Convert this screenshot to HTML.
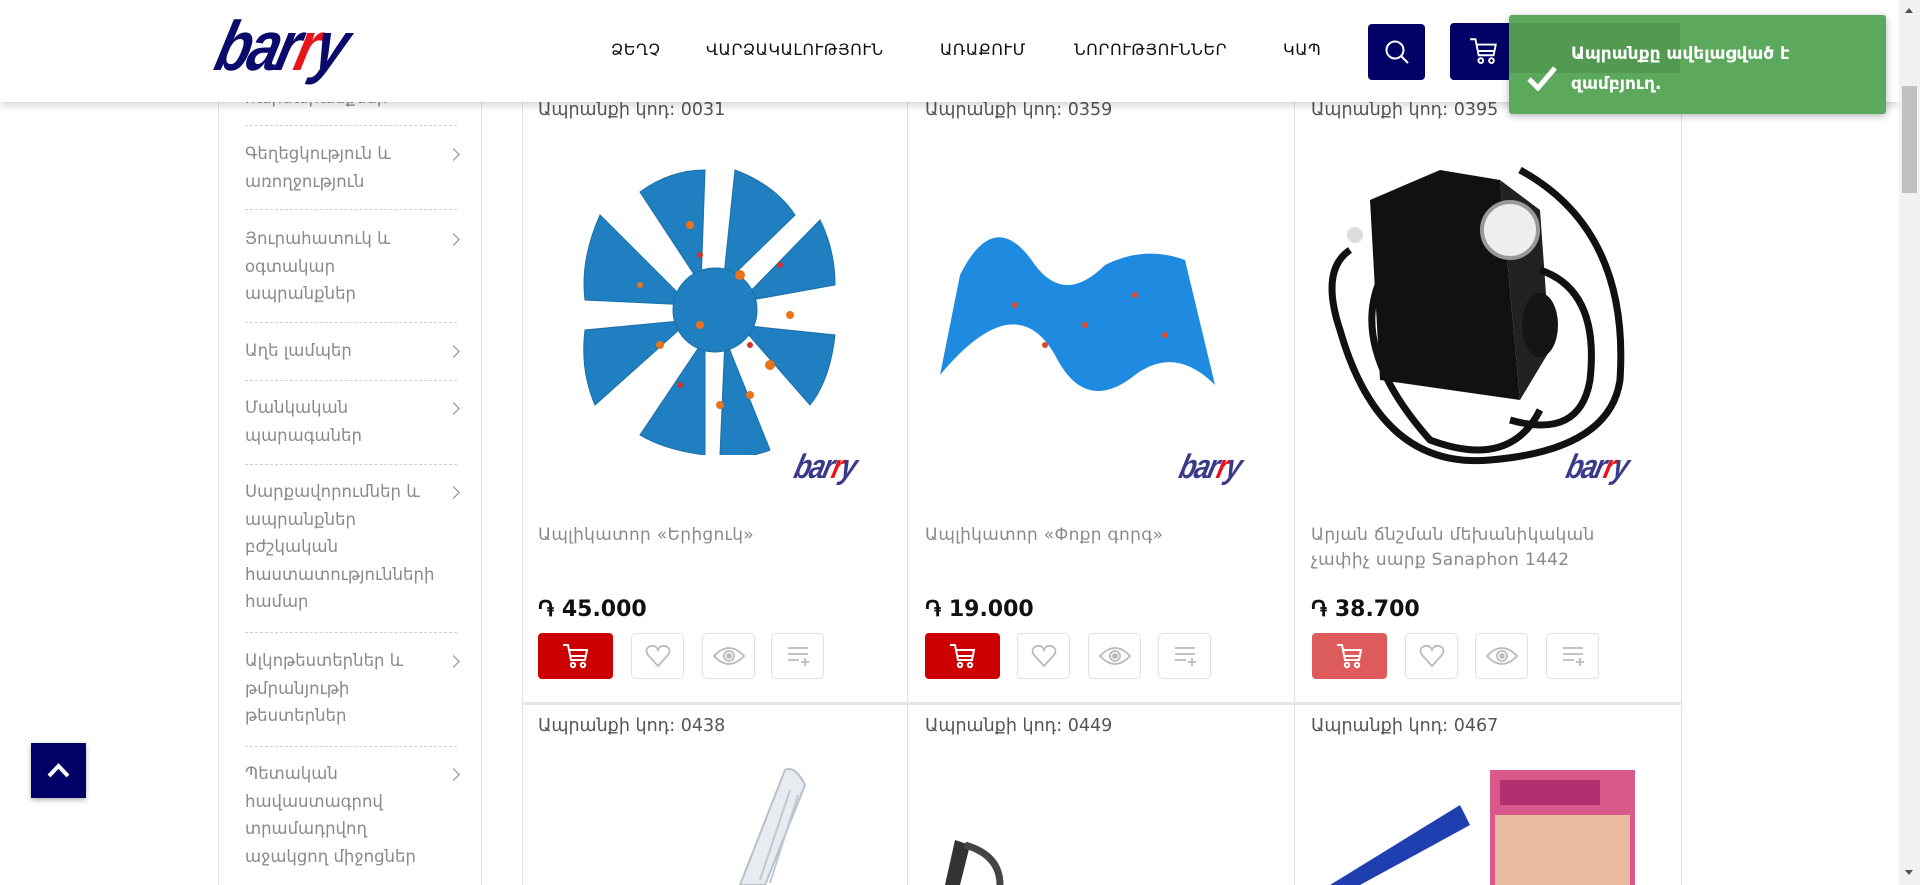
<!DOCTYPE html>
<html><head><meta charset="utf-8">
<style>
*{margin:0;padding:0;box-sizing:border-box}
body{width:1920px;height:885px;overflow:hidden;background:#fff;font-family:"DejaVu Sans","Liberation Sans",sans-serif;position:relative}
.abs{position:absolute}
header{position:absolute;left:0;top:0;width:1899px;height:102px;background:#fff;box-shadow:0 3px 8px rgba(0,0,0,.18);z-index:5}
.nav{position:absolute;top:40px;font-size:16px;color:#111;letter-spacing:.5px;white-space:nowrap}
.logo{position:absolute;left:228px;top:6px;font-family:"Liberation Sans",sans-serif;font-weight:bold;font-style:italic;font-size:70px;color:#0a0a6b;letter-spacing:-4px;transform:skewX(-14deg) scaleX(.82);transform-origin:left top}
.logo span{color:#e8141b}
.side{position:absolute;left:218px;top:0;width:264px;height:885px;border-left:1px solid #e3e3e3;border-right:1px solid #e3e3e3}
.it{position:absolute;left:26px;width:200px;font-size:16.5px;line-height:27.5px;color:#8a8a8a}
.sep{position:absolute;left:26px;width:212px;border-top:1px dashed #cfcfcf}
.chev{position:absolute;left:230px;width:9px;height:9px;border-right:1.6px solid #888;border-top:1.6px solid #888;transform:rotate(45deg)}
.vline{position:absolute;top:0;height:885px;border-left:1px solid #e3e3e3}
.code{position:absolute;font-size:17.5px;color:#555}
.name{position:absolute;font-size:17px;color:#8a8a8a;line-height:25px;letter-spacing:.3px;width:330px}
.price{position:absolute;font-size:22px;font-weight:bold;color:#111}
.bcart{position:absolute;width:75px;height:46px;border-radius:4px;background:#cc0000;top:633px}
.bsm{position:absolute;width:53px;height:46px;border-radius:5px;border:1px solid #e2e2e2;top:633px;background:#fff}
.bsm svg,.bcart svg{position:absolute;left:50%;top:50%;transform:translate(-50%,-50%)}
.wm{position:absolute;font-family:"Liberation Sans",sans-serif;font-weight:bold;font-style:italic;font-size:34px;color:#3a3a8a;letter-spacing:-2px;transform:skewX(-14deg) scaleX(.8);transform-origin:left top}
.wm span{color:#e8141b}
</style></head><body>

<div class="side">
 <div class="it" style="top:84px">հարմարանքներ</div>
 <div class="sep" style="top:125px"></div>
 <div class="it" style="top:140px">Գեղեցկություն և առողջություն</div><div class="chev" style="top:150px"></div>
 <div class="sep" style="top:209px"></div>
 <div class="it" style="top:225px;width:170px">Յուրահատուկ և օգտակար ապրանքներ</div><div class="chev" style="top:235px"></div>
 <div class="sep" style="top:322px"></div>
 <div class="it" style="top:337px">Աղե լամպեր</div><div class="chev" style="top:347px"></div>
 <div class="sep" style="top:380px"></div>
 <div class="it" style="top:394px">Մանկական պարագաներ</div><div class="chev" style="top:404px"></div>
 <div class="sep" style="top:464px"></div>
 <div class="it" style="top:478px;width:190px">Սարքավորումներ և ապրանքներ բժշկական հաստատությունների համար</div><div class="chev" style="top:488px"></div>
 <div class="sep" style="top:632px"></div>
 <div class="it" style="top:647px;width:190px">Ալկոթեստերներ և թմրանյութի թեստերներ</div><div class="chev" style="top:657px"></div>
 <div class="sep" style="top:746px"></div>
 <div class="it" style="top:760px;width:205px">Պետական հավաստագրով տրամադրվող աջակցող միջոցներ</div><div class="chev" style="top:770px"></div>
</div>

<div class="vline" style="left:522px"></div>
<div class="vline" style="left:907px"></div>
<div class="vline" style="left:1294px"></div>
<div class="vline" style="left:1681px"></div>
<div class="abs" style="left:522px;top:702px;width:1160px;border-top:3px solid #e6e6e6"></div>

<!-- product 1 -->
<div class="code" style="left:538px;top:100px">Ապրանքի կոդ: 0031</div>
<svg class="abs" style="left:580px;top:165px" width="270" height="290" viewBox="0 0 270 290">
 <g fill="#1f7fc0" stroke="#1a6fa8">
  <g transform="translate(135,145)">
   <path d="M-14,-25 L-75,-118 Q-45,-140 -10,-140 Z"/>
   <path d="M8,-25 L20,-140 Q60,-125 80,-95 Z"/>
   <path d="M25,-8 L105,-90 Q120,-60 120,-25 Z"/>
   <path d="M25,15 L120,25 Q115,70 95,95 Z"/>
   <path d="M10,28 L55,140 Q30,150 5,145 Z"/>
   <path d="M-10,28 L-10,145 Q-50,140 -75,125 Z"/>
   <path d="M-25,10 L-120,95 Q-135,60 -130,20 Z"/>
   <path d="M-25,-5 L-115,-95 Q-135,-50 -130,-10 Z"/>
   <circle r="42"/>
  </g>
 </g>
 <g fill="#e8731b"><circle cx="110" cy="60" r="4"/><circle cx="160" cy="110" r="5"/><circle cx="80" cy="180" r="4"/><circle cx="190" cy="200" r="5"/><circle cx="140" cy="240" r="4"/><circle cx="60" cy="120" r="3"/><circle cx="210" cy="150" r="4"/><circle cx="120" cy="160" r="4"/><circle cx="170" cy="230" r="4"/></g>
 <g fill="#d5302a"><circle cx="120" cy="90" r="3"/><circle cx="170" cy="180" r="3"/><circle cx="100" cy="220" r="3"/><circle cx="200" cy="100" r="3"/></g>
</svg>
<div class="wm" style="left:800px;top:448px">bar<span>r</span>y</div>
<div class="name" style="left:538px;top:523px">Ապլիկատոր «Երիցուկ»</div>
<div class="price" style="left:538px;top:597px">֏ 45.000</div>

<!-- product 2 -->
<div class="code" style="left:925px;top:100px">Ապրանքի կոդ: 0359</div>
<svg class="abs" style="left:935px;top:225px" width="340" height="180" viewBox="0 0 340 180">
 <path d="M5,150 L25,50 Q60,-20 100,40 Q130,80 170,40 Q210,20 250,35 L280,160 Q240,120 200,150 Q150,190 120,130 Q80,60 5,150 Z" fill="#1e8ae0"/>
 <g fill="#e04a2a"><circle cx="80" cy="80" r="3"/><circle cx="150" cy="100" r="3"/><circle cx="200" cy="70" r="3"/><circle cx="230" cy="110" r="3"/><circle cx="110" cy="120" r="3"/></g>
</svg>
<div class="wm" style="left:1185px;top:448px">bar<span>r</span>y</div>
<div class="name" style="left:925px;top:523px">Ապլիկատոր «Փոքր գորգ»</div>
<div class="price" style="left:925px;top:597px">֏ 19.000</div>

<!-- product 3 -->
<div class="code" style="left:1311px;top:100px">Ապրանքի կոդ: 0395</div>
<svg class="abs" style="left:1310px;top:150px" width="350" height="330" viewBox="0 0 350 330">
 <path d="M60,50 L130,20 L190,30 L210,250 L140,240 L70,230 Z" fill="#111"/>
 <path d="M190,30 L230,60 L240,200 L210,250 Z" fill="#222"/>
 <circle cx="200" cy="80" r="28" fill="#eee" stroke="#999" stroke-width="4"/>
 <ellipse cx="230" cy="175" rx="18" ry="32" fill="#151515"/>
 <g fill="none" stroke="#111" stroke-width="7">
  <path d="M40,100 Q10,120 30,180 Q70,320 180,310 Q300,300 310,230 Q320,80 210,20"/>
  <path d="M70,130 Q40,200 120,290 Q200,320 230,260"/>
  <path d="M230,120 Q290,140 280,230 Q270,290 200,270"/>
 </g>
 <circle cx="45" cy="85" r="8" fill="#ddd"/>
</svg>
<div class="wm" style="left:1572px;top:448px">bar<span>r</span>y</div>
<div class="name" style="left:1311px;top:523px;width:300px">Արյան ճնշման մեխանիկական չափիչ սարք Sanaphon 1442</div>
<div class="price" style="left:1311px;top:597px">֏ 38.700</div>

<!-- buttons -->
<div class="bcart" style="left:538px"><svg width="30" height="28" viewBox="0 0 30 28" fill="none" stroke="#fff" stroke-width="2"><path d="M2,3 H7 L10,18 H24 L26,8 H8"/><path d="M10,14 H25"/><circle cx="12" cy="23" r="2.2"/><circle cx="22" cy="23" r="2.2"/></svg></div>
<div class="bcart" style="left:925px"><svg width="30" height="28" viewBox="0 0 30 28" fill="none" stroke="#fff" stroke-width="2"><path d="M2,3 H7 L10,18 H24 L26,8 H8"/><path d="M10,14 H25"/><circle cx="12" cy="23" r="2.2"/><circle cx="22" cy="23" r="2.2"/></svg></div>
<div class="bcart" style="left:1312px;background:#de5b5b"><svg width="30" height="28" viewBox="0 0 30 28" fill="none" stroke="#fff" stroke-width="2"><path d="M2,3 H7 L10,18 H24 L26,8 H8"/><path d="M10,14 H25"/><circle cx="12" cy="23" r="2.2"/><circle cx="22" cy="23" r="2.2"/></svg></div>

<div class="bsm" style="left:631px"><svg width="26" height="24" viewBox="0 0 26 24" fill="none" stroke="#bbb" stroke-width="1.8"><path d="M13,22 L3,11 Q-1,4 6,2 Q11,1 13,6 Q15,1 20,2 Q27,4 23,11 Z"/></svg></div>
<div class="bsm" style="left:702px"><svg width="32" height="20" viewBox="0 0 32 20" fill="none" stroke="#bbb" stroke-width="1.8"><path d="M1,10 Q16,-6 31,10 Q16,26 1,10 Z"/><circle cx="16" cy="10" r="5"/><circle cx="16" cy="10" r="2" fill="#bbb"/></svg></div>
<div class="bsm" style="left:771px"><svg width="24" height="22" viewBox="0 0 24 22" fill="none" stroke="#bbb" stroke-width="1.8"><path d="M2,3 H22 M2,9 H22 M2,15 H13 M15,17 H23 M19,13 V21"/></svg></div>

<div class="bsm" style="left:1017px"><svg width="26" height="24" viewBox="0 0 26 24" fill="none" stroke="#bbb" stroke-width="1.8"><path d="M13,22 L3,11 Q-1,4 6,2 Q11,1 13,6 Q15,1 20,2 Q27,4 23,11 Z"/></svg></div>
<div class="bsm" style="left:1088px"><svg width="32" height="20" viewBox="0 0 32 20" fill="none" stroke="#bbb" stroke-width="1.8"><path d="M1,10 Q16,-6 31,10 Q16,26 1,10 Z"/><circle cx="16" cy="10" r="5"/><circle cx="16" cy="10" r="2" fill="#bbb"/></svg></div>
<div class="bsm" style="left:1158px"><svg width="24" height="22" viewBox="0 0 24 22" fill="none" stroke="#bbb" stroke-width="1.8"><path d="M2,3 H22 M2,9 H22 M2,15 H13 M15,17 H23 M19,13 V21"/></svg></div>

<div class="bsm" style="left:1405px"><svg width="26" height="24" viewBox="0 0 26 24" fill="none" stroke="#bbb" stroke-width="1.8"><path d="M13,22 L3,11 Q-1,4 6,2 Q11,1 13,6 Q15,1 20,2 Q27,4 23,11 Z"/></svg></div>
<div class="bsm" style="left:1475px"><svg width="32" height="20" viewBox="0 0 32 20" fill="none" stroke="#bbb" stroke-width="1.8"><path d="M1,10 Q16,-6 31,10 Q16,26 1,10 Z"/><circle cx="16" cy="10" r="5"/><circle cx="16" cy="10" r="2" fill="#bbb"/></svg></div>
<div class="bsm" style="left:1546px"><svg width="24" height="22" viewBox="0 0 24 22" fill="none" stroke="#bbb" stroke-width="1.8"><path d="M2,3 H22 M2,9 H22 M2,15 H13 M15,17 H23 M19,13 V21"/></svg></div>

<!-- row 2 -->
<div class="code" style="left:538px;top:716px">Ապրանքի կոդ: 0438</div>
<div class="code" style="left:925px;top:716px">Ապրանքի կոդ: 0449</div>
<div class="code" style="left:1311px;top:716px">Ապրանքի կոդ: 0467</div>
<svg class="abs" style="left:690px;top:765px" width="130" height="120" viewBox="0 0 130 120"><path d="M50,120 L95,5 Q105,0 115,20 L75,120 Z" fill="#e8ecf0" stroke="#b8c0c8" stroke-width="2"/><path d="M70,115 L100,25 M80,118 L108,30" stroke="#c0c8d0" stroke-width="2"/></svg>
<svg class="abs" style="left:940px;top:835px" width="70" height="50" viewBox="0 0 70 50"><path d="M5,50 L15,5 L30,10 L20,50 Z" fill="#333"/><path d="M25,10 Q60,20 60,50" fill="none" stroke="#444" stroke-width="7"/></svg>
<svg class="abs" style="left:1310px;top:765px" width="340" height="120" viewBox="0 0 340 120"><path d="M20,120 L150,40 L160,60 L50,120 Z" fill="#1f3fb0"/><rect x="180" y="5" width="145" height="115" fill="#d95a8a"/><rect x="185" y="50" width="135" height="70" fill="#e9b9a0"/><rect x="190" y="15" width="100" height="25" fill="#b23070"/></svg>

<!-- header -->
<header>
 <div class="logo">bar<span>r</span>y</div>
 <div class="nav" style="left:611px">ՁԵՂՉ</div>
 <div class="nav" style="left:706px">ՎԱՐՁԱԿԱԼՈՒԹՅՈՒՆ</div>
 <div class="nav" style="left:940px">ԱՌԱՔՈՒՄ</div>
 <div class="nav" style="left:1074px">ՆՈՐՈՒԹՅՈՒՆՆԵՐ</div>
 <div class="nav" style="left:1283px">ԿԱՊ</div>
 <div class="abs" style="left:1368px;top:24px;width:57px;height:56px;background:#000066;border-radius:4px"><svg class="abs" style="left:16px;top:15px" width="26" height="26" viewBox="0 0 26 26" fill="none" stroke="#fff" stroke-width="2"><circle cx="11" cy="11" r="8.5"/><path d="M17,17 L24,24"/></svg></div>
 <div class="abs" style="left:1450px;top:23px;width:230px;height:57px;background:#000066;border-radius:4px"><svg class="abs" style="left:18px;top:12px" width="32" height="32" viewBox="0 0 30 28" fill="none" stroke="#fff" stroke-width="1.8"><path d="M2,3 H7 L10,18 H24 L26,8 H8"/><path d="M10,14 H25"/><circle cx="12" cy="23" r="2.2"/><circle cx="22" cy="23" r="2.2"/></svg></div>
</header>

<!-- toast -->
<div class="abs" style="left:1509px;top:15px;width:377px;height:99px;background:#5ca85c;border-radius:3px;box-shadow:0 2px 8px rgba(0,0,0,.3);z-index:7">
 <div class="abs" style="left:0;top:8px;width:171px;height:50px;background:#529a52"></div>
 <svg class="abs" style="left:18px;top:50px" width="30" height="26" viewBox="0 0 30 26"><path d="M2,14 L11,23 L28,3" fill="none" stroke="#fff" stroke-width="5"/></svg>
 <div class="abs" style="left:62px;top:24px;color:#fff;font-weight:bold;font-size:17px;line-height:30px;width:300px">Ապրանքը ավելացված է զամբյուղ.</div>
</div>

<!-- scrollbar -->
<div class="abs" style="left:1899px;top:0;width:21px;height:885px;background:#f1f1f1;z-index:8">
 <div class="abs" style="left:6px;top:8px;border:4px solid transparent;border-bottom:5px solid #505050;border-top:0"></div>
 <div class="abs" style="left:3px;top:86px;width:15px;height:107px;background:#c1c1c1"></div>
 <div class="abs" style="left:6px;top:870px;border:4px solid transparent;border-top:5px solid #505050;border-bottom:0"></div>
</div>

<!-- back to top -->
<div class="abs" style="left:31px;top:743px;width:55px;height:55px;background:#000066;z-index:6;box-shadow:0 2px 5px rgba(0,0,0,.3)"><svg class="abs" style="left:15px;top:18px" width="25" height="18" viewBox="0 0 25 18"><path d="M3,15 L12.5,5 L22,15" fill="none" stroke="#fff" stroke-width="4"/></svg></div>
</body></html>
